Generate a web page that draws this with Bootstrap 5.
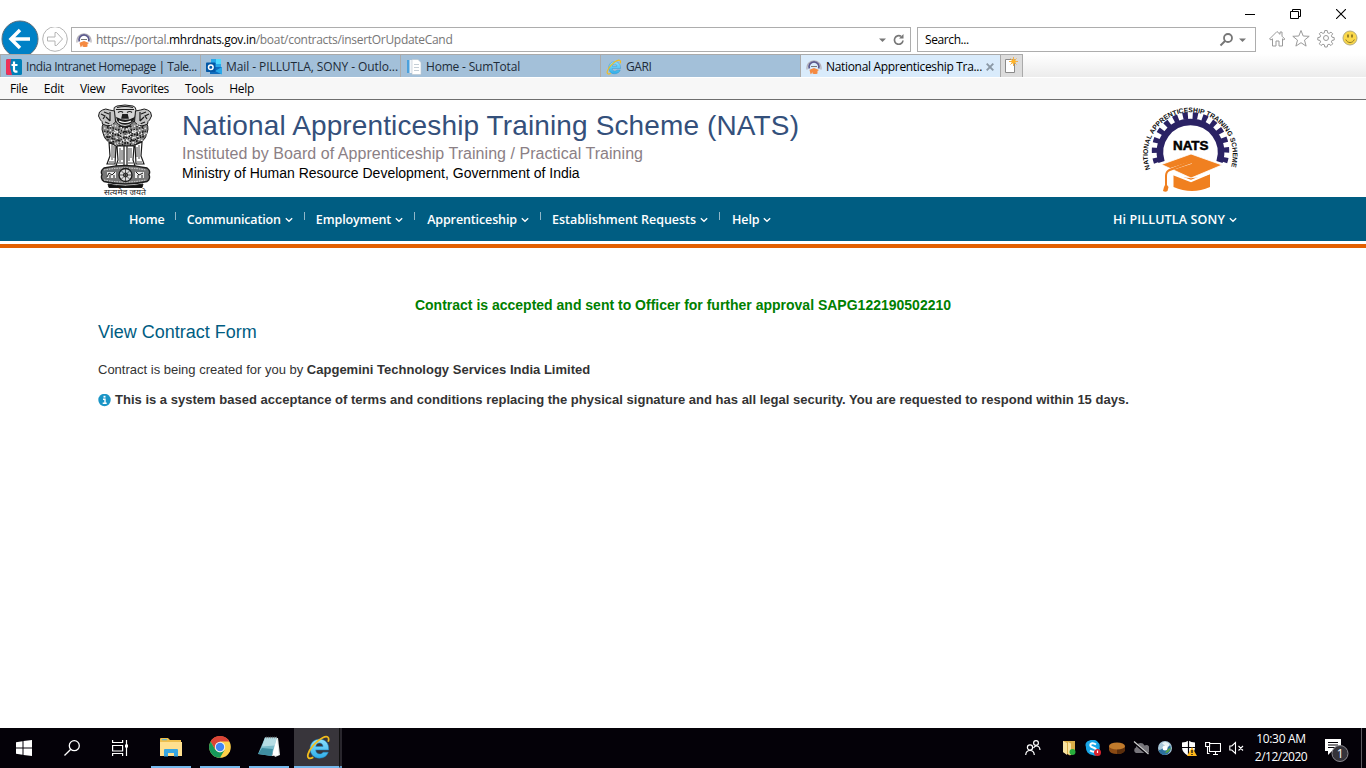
<!DOCTYPE html>
<html lang="en">
<head>
<meta charset="utf-8">
<title>National Apprenticeship Training Scheme</title>
<link rel="stylesheet" href="https://cdn.jsdelivr.net/npm/bootstrap@5.3.0/dist/css/bootstrap.min.css">
<script src="https://cdn.jsdelivr.net/npm/bootstrap@5.3.0/dist/js/bootstrap.bundle.min.js"></script>
<style>
body{font-family:"Liberation Sans",Arial,sans-serif;font-size:13px;color:#333;background:#fff;height:768px;overflow:hidden}
svg{display:block;flex:none}
.ui{font-family:"Open Sans","Noto Sans",sans-serif;font-size:12px;color:#000;white-space:nowrap;letter-spacing:-.3px}
.winbar{height:27px;padding:0 20px 0 0;gap:35px}
.addr-row{height:27px}
.go-back{width:41px;height:35px;margin-top:-8px}
.field{height:25px;border:1px solid #adadad;background:#fff}
.field-url{width:840px;color:#767676}
.field-url b{font-weight:400;color:#000}
.field-search{width:339px;margin-left:6px;letter-spacing:-.4px}
.tabs{height:23px;background:linear-gradient(#fff,#ececec)}
.tab{width:200px;height:23px;background:#a3c0d9;border-left:1px solid #aaa;border-top:1px solid #aaa;padding:1px 0 0 5px;color:#1d2b38}
.tab.on{background:#d9ebfb;color:#000}
.tab-new{width:23px;height:23px;background:#dcdcdc;border:1px solid #aaa;border-bottom:0}
.ls-intranet{letter-spacing:-.445px}
.ls-mail{letter-spacing:-.08px}
.ls-sum{letter-spacing:-.19px}
.ls-gari{letter-spacing:-.4px}
.ls-nats{letter-spacing:-.323px}
.menubar-ie{height:23px;background:#f7f7f7;border-top:1px solid #fff;border-bottom:1px solid #6e6e6e;padding:1px 0 0 10px;gap:16px}
.page-wrap{width:1170px;margin:0 auto}
.masthead{height:97px}
.brand-text{margin:10px 0 0 28px}
.t1{font-size:28px;line-height:32px;color:#34507b;letter-spacing:.13px}
.t2{font-size:16px;line-height:20px;color:#8b8085;letter-spacing:.045px;margin-top:2px}
.t3{font-size:14px;line-height:20px;color:#000;margin-top:-1px}
.nats-logo{margin-right:28px}
.mainnav{height:44px;background:#005d82;font-family:"Open Sans",sans-serif;font-size:12.5px;font-weight:600;color:#fff;white-space:nowrap;letter-spacing:-.12px}
.mainnav .nav-row{padding:3px 31px 0 31px}
.mainnav .sep{width:1px;height:8px;background:#8fb7c9;margin:-10px 11px 0}
.mainnav .sep-first{margin:-10px 11px 0 10px}
.ls-comm{letter-spacing:-.16px}
.ls-est{letter-spacing:-.02px}
.ls-user{letter-spacing:.14px}
.chev{margin:-1px 0 0 4px}
.stripe{height:4px;background:#e35f00;margin-top:3px}
.msg{font-size:14px;font-weight:700;color:#008000;line-height:20px;margin-top:47px}
.h-form{font-size:18px;line-height:22px;color:#005d82;margin-top:6px}
.line{line-height:20px;white-space:nowrap}
.line b{letter-spacing:.01px}
.created{margin-top:17px}
.notice{margin-top:10px}
.taskbar{height:40px;background:#040108;color:#fff}
.tb{width:48px;height:40px;display:flex;align-items:center;justify-content:center}
.tb-app{width:40px;border-bottom:2px solid #76b9ed;margin-right:9px}
.tb-on{width:45px;border-bottom:2px solid #76b9ed;background:#38353b;padding-left:3px}
.tb-side{width:3px;height:40px;background:#29262d;border-left:1px solid #111;border-bottom:2px solid #5f96c2}
.tray{gap:8px}
.clock{line-height:18px;text-align:center;width:56px;margin-left:8px}
.clock .date{letter-spacing:-.5px}
.note{width:26px;margin-left:15px}
.peek{width:1px;height:40px;background:#5c5a60;margin:0 4px 0 11px}
</style>
</head>
<body class="d-flex flex-column">
<svg width="0" height="0" class="position-absolute">
 <defs>
  <linearGradient id="ieg" x1="0" y1="0" x2="0" y2="1"><stop offset="0" stop-color="#8ee2ff"/><stop offset="1" stop-color="#2eaee8"/></linearGradient>
  <symbol id="ie" viewBox="0 0 24 24">
   <path d="M21.800 14.300H9.300c.2 2.600 1.700 3.900 3.900 3.900 1.600 0 2.600-.7 3.200-1.700h5c-1.300 3.700-4.300 5.700-8.500 5.700C7.500 22.200 4 18.500 4 13S7.700 4 12.900 4c5.500 0 9.200 3.600 8.900 10.300zM9.400 11h7c-.2-2.100-1.500-3.300-3.500-3.300-1.900 0-3.200 1.200-3.500 3.300z" fill="url(#ieg)" stroke="#1c86c8" stroke-width=".5"/>
   <path d="M7 21.300c-3.500 2.200-6.200 1.300-5-3C3.300 13.500 9.500 5.800 16 2.600c4.500-2.200 6.800-.6 5.300 3.900" fill="none" stroke="#f3bd1d" stroke-width="1.700"/>
  </symbol>
  <symbol id="nats-s" viewBox="0 0 16 16">
   <path d="M1.200 10.500A7 7 0 1 1 14.800 10.500" fill="none" stroke="#b3b0b8" stroke-width="1.300"/>
   <path d="M3.300 9.500A5 5 0 1 1 12.700 9.500" fill="none" stroke="#5a588c" stroke-width="1.800"/>
   <path d="M5 7.500h6" stroke="#777" stroke-width="1"/>
   <path d="M3.500 10.800l4.500-1.800 5 2-1.500 1v2.500q-2.500 1-5 0V13l-1.500 2.200-.5-.3z" fill="#f58a42"/>
  </symbol>
  <symbol id="chev" viewBox="0 0 8 6"><path d="M.8 1.200L4 4.300 7.200 1.200" fill="none" stroke="#fff" stroke-width="1.300"/></symbol>
 </defs>
</svg>

<!-- Browser window -->
<div class="ui">
 <div class="winbar d-flex justify-content-end align-items-center">
  <svg width="10" height="10"><path d="M0 5.500h10" stroke="#000"/></svg>
  <svg width="11" height="10"><path d="M2.500 2.500V.5h8v7h-2M.5 2.500h8v7h-8z" fill="none" stroke="#000"/></svg>
  <svg width="10" height="10"><path d="M0 0l10 10M10 0L0 10" stroke="#000" stroke-width="1.100"/></svg>
 </div>
 <div class="addr-row d-flex">
  <svg class="go-back" width="41" height="35" viewBox="0 19 41 35"><circle cx="20" cy="39" r="18" fill="#0081c6" stroke="#5c6f7b" stroke-width="1"/><path d="M30 39H12M20 30l-9 9 9 9" fill="none" stroke="#fff" stroke-width="3.500"/></svg>
  <svg width="30" height="27" viewBox="41 27 30 27"><circle cx="55" cy="39" r="12.300" fill="#fff" stroke="#b4b4b4"/><path d="M47.500 37h7.500v-4.500l1.500 0 6 6.500-6 6.500H55V41h-7.500z" fill="none" stroke="#b4b4b4"/></svg>
  <div class="field field-url d-flex align-items-center">
   <svg class="ms-1 me-1" width="16" height="16"><use href="#nats-s"/></svg>
   <span>https://portal.<b>mhrdnats.gov.in</b>/boat/contracts/insertOrUpdateCand</span>
   <svg class="ms-auto" style="margin-right:3px" width="28" height="12"><path d="M0 4.500h7l-3.500 3.500z" fill="#777"/><path d="M24 6.500a4.300 4.300 0 1 1-2-4.200" fill="none" stroke="#777" stroke-width="1.700"/><path d="M24.500 0v4.500H20z" fill="#777"/></svg>
  </div>
  <div class="field field-search d-flex align-items-center">
   <span style="margin-left:7px">Search...</span>
   <svg class="ms-auto" width="36" height="16"><circle cx="9" cy="6" r="4" fill="none" stroke="#777" stroke-width="1.800"/><path d="M6 9L1.500 13.500" stroke="#777" stroke-width="2"/><path d="M20 6.500h7l-3.500 3.500z" fill="#777"/></svg>
  </div>
  <svg class="ms-2" width="100" height="24" viewBox="1264 27 100 24" fill="none" stroke="#9a9a9a">
   <path d="M1269.500 39l7.500-7.500 3 2.800v-2.300h2v4.200l2.800 2.800-1 1-1.300-1.200v7.200h-3.500v-5h-3v5h-3.500v-7.200l-1.500 1.200z"/>
   <path d="M1301 30.500l2.200 5.500 6 .3-4.700 3.800 1.600 6-5.100-3.400-5.100 3.400 1.600-6-4.700-3.800 6-.3z"/>
   <circle cx="1326" cy="38" r="2.500"/><path d="M1324.800 30.500h2.400l.4 2.300 1.500.6 1.900-1.300 1.700 1.700-1.300 1.900.6 1.500 2.200.4v2.400l-2.200.4-.6 1.500 1.300 1.900-1.700 1.700-1.900-1.300-1.500.6-.4 2.200h-2.400l-.4-2.200-1.500-.6-1.900 1.300-1.700-1.700 1.300-1.900-.6-1.500-2.200-.4v-2.400l2.200-.4.6-1.500-1.300-1.900 1.700-1.700 1.900 1.300 1.500-.6z"/>
   <circle cx="1350" cy="38" r="7" fill="#fbd84a" stroke="#b5ac80"/><path d="M1345.800 39.500c1.500 4 7 4 8.500 0" stroke="#8a7526"/><path d="M1348 34.500v3M1352 34.500v3" stroke="#7a661e" stroke-width="1.500"/>
  </svg>
 </div>
 <div class="tabs d-flex">
  <div class="tab d-flex align-items-center gap-1"><svg width="16" height="16"><rect width="16" height="16" rx="1.500" fill="#0080b8"/><path d="M0 1.500Q0 0 2 0h3l-1 8 2 8H2Q0 16 0 14z" fill="#ee3158"/><path d="M8 2.500v8.500q0 2 3.500 1.500M5.500 6h6" fill="none" stroke="#fff" stroke-width="2.200"/></svg><span class="ls-intranet">India Intranet Homepage | Tale...</span></div>
  <div class="tab d-flex align-items-center gap-1"><svg width="16" height="16"><path d="M5 0h10v10H5z" fill="#28a8ea"/><path d="M10 0h5v5h-5z" fill="#50d9ff"/><path d="M4 8h12v7H4z" fill="#0f6cbd"/><path d="M16 8l-7 4 7 3.500z" fill="#28a8ea"/><rect y="3.500" width="9.500" height="9.500" rx=".8" fill="#0358a7"/><circle cx="4.800" cy="8.200" r="2.300" fill="none" stroke="#fff" stroke-width="1.500"/></svg><span class="ls-mail">Mail - PILLUTLA, SONY - Outlo...</span></div>
  <div class="tab d-flex align-items-center gap-1"><svg width="16" height="16"><path d="M1 1h9v13H1z" fill="#f2f6fa"/><path d="M1 1h2.500v13H1z" fill="#4aa0dc"/><path d="M6 .5h6l3 3v12H6z" fill="#fff" stroke="#b9c3cd" stroke-width=".6"/><path d="M8 5.500h5M8 8.500h5M8 11.500h5" stroke="#c5ced6"/></svg><span class="ls-sum">Home - SumTotal</span></div>
  <div class="tab d-flex align-items-center"><svg width="16" height="16" class="me-1"><use href="#ie"/></svg><span class="ls-gari">GARI</span></div>
  <div class="tab on d-flex align-items-center gap-1"><svg width="16" height="16"><use href="#nats-s"/></svg><span class="ls-nats">National Apprenticeship Tra...</span><svg width="8" height="8"><path d="M.7.7l6.600 6.600M7.300.7L.7 7.300" stroke="#8a98a5" stroke-width="1.900"/></svg></div>
  <div class="tab-new"><svg width="21" height="22"><path d="M4.500 4.500h9v13h-9z" fill="#fff" stroke="#8a8a8a"/><path d="M12.500 2v9M8 6.500h9M9.500 3.500l6 6M15.500 3.500l-6 6" stroke="#f0b050" stroke-width="1"/><circle cx="12.500" cy="6.500" r="2.300" fill="#ffb428"/></svg></div>
 </div>
 <div class="menubar-ie d-flex align-items-center">
  <span>File</span><span>Edit</span><span>View</span><span>Favorites</span><span>Tools</span><span>Help</span>
 </div>
</div>

<!-- Site header -->
<header class="masthead page-wrap d-flex overflow-hidden flex-shrink-0">
 <svg width="56" height="97" viewBox="1 0 56 97" fill="none" stroke="#1c1c1c" stroke-width="1">
  <path d="M9 20q-6 6-3 13 2 8 7 9l8 4h14l8-4q5-1 7-9 3-7-3-13z" fill="#8a8a8a"/>
  <path d="M17 10q-1-3 3-4 8-2 16 0 3 1 3 4l-1 9q-3 7-10 7.500-8-.5-10-7.500z" fill="#d5d5d5"/>
  <path d="M1.500 16q0-5 4-6 3-2 7 0l5 1 1 11q-3 4-8 4l-5-2q0-3-2-4zM54.500 16q0-5-4-6-3-2-7 0l-5 1-1 11q3 4 8 4l5-2q0-3 2-4z" fill="#c4c4c4"/>
  <path d="M19 9.500h18M20 7.500q8-2 16 0M21 12.500q3-2 5 0M30 12.500q3-2 5 0" stroke-width="1.200"/>
  <path d="M26 14l-1 4h6l-1-4M20 18q1 6 8 6t9-6q-8 5-17 0zM22 26q6 3 12 0" stroke-width="1.400" fill="#222"/>
  <path d="M22 21q6 3 12 0" stroke="#fff" stroke-width="1.200"/>
  <path d="M4 14l4 2-2 3M52 14l-4 2 2 3M7 12l5 2M49 12l-5 2M9 17l4 4M47 17l-4 4M8 22l5 2M48 22l-5 2M13 12v9M43 12v9" stroke-width="1.200"/>
  <path d="M7 28l40 13M7 33l36 12M12 24l38 11M49 28L11 42M50 33L16 45M44 24L7 36M13 26l24 20M43 26L19 46" stroke="#f4f4f4" stroke-width="1.300" stroke-dasharray="1.500 1.500"/>
  <path d="M7 31l38 12M9 36l28 10M49 31L13 43M47 36L22 46M10 27l38 10M46 27L8 38M16 27v18M28 28v18M22 26v20M34 26v20M40 26v18M11 25v16M46 25v14" stroke="#111" stroke-width="1.200" stroke-dasharray="1.500 1.300"/>
  <path d="M12 42l1 14-3 8h8l1-18zM20 46l1 14-2 6h8V46zM30 46v20h8l-2-6 1-14zM38 45l1 19h8l-3-8 1-14z" fill="#fff" stroke-width="1.200"/>
  <path d="M15 44v16M17 46v12M23 48v14M25 50v10M32 48v13M34 48v10M40 47v10M42 45v14M12 62h5M21 63h5M31 63h5M40 62h5" stroke-width=".8"/>
  <path d="M7 68q21-5 43 0 4 3 2 6.500 2 4-2 7-22 5-43 0-4-3-2-7-2-3.500 2-6.500z" fill="#777" stroke-width="1.400"/>
  <path d="M7 70q21-4 42 0M7 80q21 4 42 0" stroke="#ddd" stroke-dasharray="1.500 1"/>
  <circle cx="28.500" cy="75" r="6.500" fill="#ddd" stroke-width="1.300"/><circle cx="28.500" cy="75" r="2"/><path d="M28.500 68.500v13M22 75h13M24 70.500l9 9M33 70.500l-9 9" stroke-width=".7"/>
  <path d="M10 72h9v6h-9zM38 72h9v6h-9z" fill="#eee" stroke="none"/>
  <path d="M10 77l2-4 3 2 3-3M13 78v-3M17 78v-3M39 72l3 3 4-2M41 78v-3M45 78v-3"/>
  <path d="M11 84q17 4 35 0l-1 3.500H12z" fill="#111"/>
  <text x="7" y="95" font-family="'Noto Sans Devanagari','Noto Sans',sans-serif" font-size="8" textLength="42" lengthAdjust="spacingAndGlyphs" fill="#222" stroke="none">सत्यमेव जयते</text>
 </svg>
 <div class="brand-text text-nowrap">
  <div class="t1">National Apprenticeship Training Scheme (NATS)</div>
  <div class="t2">Instituted by Board of Apprenticeship Training / Practical Training</div>
  <div class="t3">Ministry of Human Resource Development, Government of India</div>
 </div>
 <svg class="ms-auto nats-logo" width="100" height="97" viewBox="0 0 100 97">
  <defs><path id="arc" d="M10.300 69.100A42.500 42.500 0 1 1 90.700 68"/></defs>
  <path d="M21.500 62A30.500 30.500 0 1 1 79.500 62" fill="none" stroke="#2a2264" stroke-width="6.500"/>
  <path d="M17.300 62.500A35.200 35.200 0 1 1 83.700 62.500" fill="none" stroke="#2a2264" stroke-width="7" stroke-dasharray="5 4.900"/>
  <text font-size="6.800" font-weight="700" fill="#111"><textPath href="#arc" textLength="160" lengthAdjust="spacing">NATIONAL APPRENTICESHIP TRAINING SCHEME</textPath></text>
  <text x="33" y="49.500" font-size="12.500" font-weight="700" fill="#000" stroke="#000" stroke-width=".5" textLength="35.500" lengthAdjust="spacingAndGlyphs">NATS</text>
  <path d="M33.500 74q17 8 36.500 0v13q-18 8-36.500 0z" fill="#f08020"/>
  <path d="M21.500 64.500L51 54l31 11-31 13z" fill="#f08020" stroke="#fff" stroke-width=".8"/>
  <path d="M51.500 62.500L30 69.500q-2.500 1-2.500 5v9" fill="none" stroke="#fff" stroke-width="2.400"/>
  <path d="M31.500 73.500L51 81l19-8" fill="none" stroke="#fff" stroke-width="2.200"/>
  <path d="M51 60.500l3 2-24 8.500q-3 1-3 5v9l1.500 2-1 4q-2 1.500-4.500 0l1-4 1-2v-9q0-5 4-7z" fill="#f08020"/>
 </svg>
</header>
<nav class="mainnav flex-shrink-0">
 <div class="nav-row page-wrap d-flex align-items-center h-100">
  <span>Home</span><i class="sep sep-first"></i>
  <span class="ls-comm">Communication</span><svg class="chev" width="8" height="6"><use href="#chev"/></svg><i class="sep"></i>
  <span>Employment</span><svg class="chev" width="8" height="6"><use href="#chev"/></svg><i class="sep"></i>
  <span style="margin-left:1px">Apprenticeship</span><svg class="chev" width="8" height="6"><use href="#chev"/></svg><i class="sep"></i>
  <span class="ls-est">Establishment Requests</span><svg class="chev" width="8" height="6"><use href="#chev"/></svg><i class="sep"></i>
  <span style="margin-left:1px">Help</span><svg class="chev" width="8" height="6"><use href="#chev"/></svg>
  <span class="ms-auto ls-user">Hi PILLUTLA SONY</span><svg class="chev" width="8" height="6"><use href="#chev"/></svg>
 </div>
</nav>
<div class="stripe flex-shrink-0"></div>

<main class="page-wrap flex-grow-1">
 <div class="msg text-center">Contract is accepted and sent to Officer for further approval SAPG122190502210</div>
 <div class="h-form">View Contract Form</div>
 <div class="line created">Contract is being created for you by <b>Capgemini Technology Services India Limited</b></div>
 <div class="line notice d-flex align-items-center"><svg class="me-1" width="13" height="13" viewBox="0 1.500 13 13"><circle cx="6.500" cy="7.500" r="6.200" fill="#1a95c6"/><path d="M5 6.700h2v4M4.700 10.700h4" fill="none" stroke="#fff" stroke-width="1.400"/><path d="M5.500 3.300h2v1.800h-2z" fill="#fff"/></svg><b>This is a system based acceptance of terms and conditions replacing the physical signature and has all legal security. You are requested to respond within 15 days.</b></div>
</main>

<!-- Desktop taskbar -->
<footer class="taskbar ui d-flex align-items-center flex-shrink-0">
 <div class="tb"><svg width="16" height="16" fill="#fff"><path d="M0 2.200L6.500 1.200v6.300H0zM7.500 1.100L16 0v7.500H7.500zM0 8.500h6.500v6.300L0 13.800zM7.500 8.500H16V16l-8.500-1.100z"/></svg></div>
 <div class="tb"><svg width="16" height="16" fill="none" stroke="#fff" stroke-width="1.300"><circle cx="10.300" cy="5.700" r="5"/><path d="M6.800 9.200L.5 15.500"/></svg></div>
 <div class="tb" style="margin-right:7px"><svg width="16" height="16" fill="none" stroke="#fff" stroke-width="1.200"><path d="M.6 0v2.500h10V0M.6 16v-2.500h10V16M.6 5.500h10v5.500H.6zM14.500 0v16"/><path d="M13 4.500h3v3h-3z" fill="#fff" stroke="none"/></svg></div>
 <div class="tb tb-app"><svg width="22" height="19"><path d="M0 1q0-1 1-1h7l2 2h11v4H0z" fill="#eebf4d"/><path d="M2 1.200h5v1H2z" fill="#4ab4e8"/><path d="M0 4h22v14H0z" fill="#ffe08f"/><path d="M4 18.500V12q0-1 1-1h12q1 0 1 1v6.500h-4V15H8v3.500z" fill="#37a6e2"/></svg></div>
 <div class="tb tb-app"><svg width="22" height="22" viewBox="-11 -11 22 22"><circle r="10.800" fill="#ffd04a"/><path d="M-9.400-5.400A10.800 10.800 0 0 1 9.400-5.400H0L-4.700 2.700z" fill="#db4437"/><path d="M-9.400-5.400L-4.700 2.700 0 5.400 4.700 2.700 0 10.800A10.800 10.800 0 0 1-9.400-5.400z" fill="#169a5a"/><circle r="5.200" fill="#f3f3f3"/><circle r="4.200" fill="#4285f4"/></svg></div>
 <div class="tb tb-app" style="margin-right:5px"><svg width="24" height="22"><path d="M9 2h12l2 17-5 2z" fill="#e4e8e6"/><path d="M8 1.500h12L15 20 1 18z" fill="#7bbccb"/><path d="M8 1.500h12l-2 8-13 1z" fill="#b5dce4"/><path d="M5 12l11 1-1.500 7L1 18z" fill="#3f8ea2"/><path d="M15 20l5-18 1.500 17z" fill="#fff"/><path d="M9 1.500h12" stroke="#777" stroke-width="1.400" stroke-dasharray="1 1"/></svg></div>
 <div class="tb tb-on"><svg width="25" height="25"><use href="#ie"/></svg></div><div class="tb-side"></div>

 <div class="tray d-flex align-items-center ms-auto">
  <svg width="16" height="16" style="margin-right:12px" fill="none" stroke="#fff" stroke-width="1.200"><circle cx="11" cy="3" r="2.400"/><circle cx="5" cy="7.500" r="2.600"/><path d="M.7 15q.3-4.500 4.300-4.500T9.300 15M8.500 8q1-2 3-2 3.200 0 3.500 4"/></svg>
  <svg width="16" height="16"><path d="M2 1h12v11l-5 3.500L2 12z" fill="#d9ad48"/><path d="M2 1l4 2v12l-4-3zM7 2l3 1.500V15l-3-1z" fill="#f7e2a0"/><circle cx="11.500" cy="12" r="3" fill="#27ae3c"/></svg>
  <svg width="16" height="16"><path d="M4.500.5a7 7 0 0 1 10 8 5 5 0 0 1-7 6.500A7 7 0 0 1 1 7 4.500 4.500 0 0 1 4.500.5z" fill="#18a5e6"/><path d="M11 4.500Q7.500 2 5.500 4.200 4.500 6.500 8 7.500t3 3Q9 13 5 10.500" fill="none" stroke="#fff" stroke-width="2"/><circle cx="12.500" cy="12.500" r="3.500" fill="#d8222e"/><path d="M12.500 10.500v2.500" stroke="#fff" stroke-width="1.200"/></svg>
  <svg width="16" height="16"><path d="M0 6v4q1 4 8 4t8-4V6z" fill="#8a4a14"/><path d="M8 8l8-1v3q-1 4-8 4z" fill="#5b2e0c"/><ellipse cx="8" cy="6" rx="8" ry="3.600" fill="#c07a2c"/></svg>
  <svg width="16" height="16"><path d="M3 13a3 3 0 0 1 0-5.500 4.500 4.500 0 0 1 8.500-2 4 4 0 0 1 3 7.500z" fill="#77757b"/><path d="M1 2.500l14 12" stroke="#040108" stroke-width="2.400"/><path d="M1 1.500l14.500 12.500" stroke="#d0d0d0" stroke-width="1.200"/></svg>
  <svg width="16" height="16"><circle cx="8" cy="8" r="7" fill="#a8c6d8"/><path d="M1.500 10q4 0 5.500-4 3-4 6-1A7 7 0 0 1 8 15q-5 0-6.500-5z" fill="#2b6f9c"/><path d="M5 3q5-3 8 2l-3 3z" fill="#e8f1f4"/><path d="M8 13q4 0 6-5-3 0-6 5z" fill="#58a746"/><circle cx="8" cy="8" r="2.500" fill="#fff"/></svg>
  <svg width="16" height="16"><path d="M1 2.500q4 0 6.500-2 2.500 2 6.500 2v5q0 5-6.500 8.500Q1 12.500 1 7.500z" fill="#fff"/><path d="M7.500 0v16M1 7.500h13" stroke="#040108" stroke-width="1.200"/><path d="M11 7l5 9H6z" fill="#ffb81c"/><path d="M11 10v3M11 14v1" stroke="#111" stroke-width="1.300"/></svg>
  <svg width="16" height="16" fill="none" stroke="#fff" stroke-width="1.100"><path d="M5 3.500h10.500v8H4.500V7M8 14.500h5M10.500 11.500v3M.6 2.500h4v4h-4zM2.500 6.500v7h2"/></svg>
  <svg width="16" height="16" fill="none" stroke="#fff" stroke-width="1.100"><path d="M.8 6v4h2L6.500 13.500v-11L2.800 6zM9.500 6l4.500 4.500M14 6L9.500 10.500"/></svg>
 </div>
 <div class="clock"><div>10:30 AM</div><div class="date">2/12/2020</div></div>
 <div class="note"><svg width="26" height="28" viewBox="0 0 26 28"><path d="M1 5h16v12H8l-4 4v-4H1z" fill="#fff"/><path d="M4 8.500h10M4 11h10M4 13.500h7" stroke="#040108" stroke-width="1.100"/><circle cx="16" cy="19.500" r="8" fill="#35333a" stroke="#8a888e"/><text x="16" y="23.700" font-size="12" fill="#fff" text-anchor="middle">1</text></svg></div>
 <div class="peek"></div>
</footer>
</body>
</html>
